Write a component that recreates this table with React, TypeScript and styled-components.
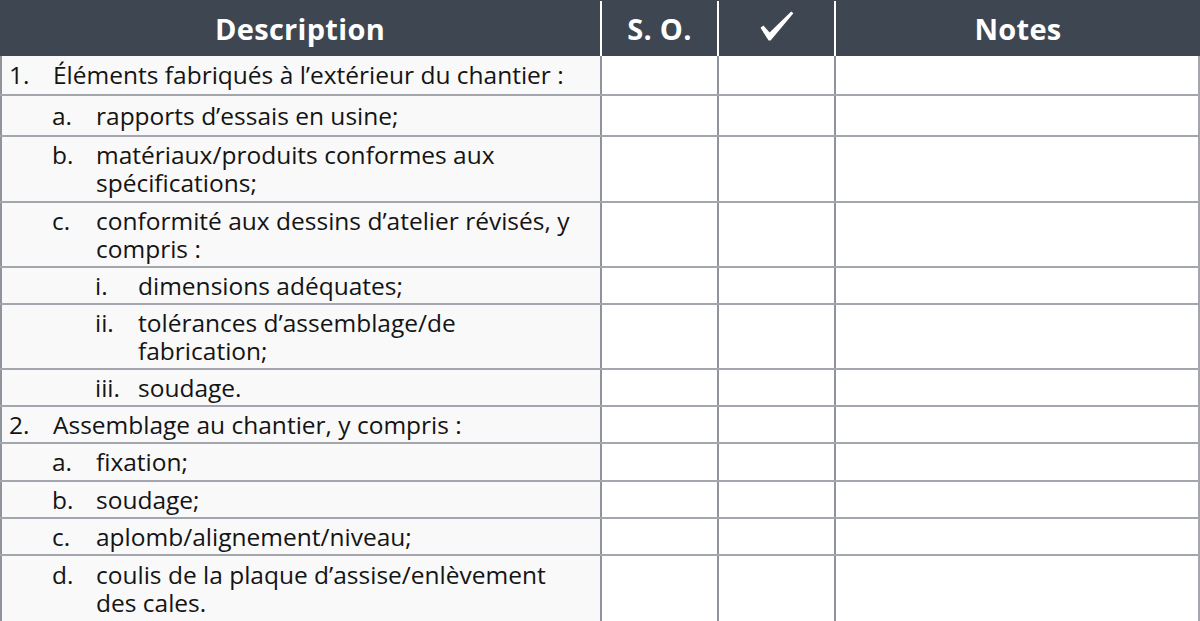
import React from "react";
import styled, { createGlobalStyle } from "styled-components";

const GlobalStyle = createGlobalStyle`
  html, body { margin: 0; padding: 0; background: #ffffff; }
  body { font-family: "Open Sans", "Noto Sans", sans-serif; }
  * { box-sizing: border-box; }
`;

const COLS = "600px 117px 117px 366px";

const Table = styled.div`
  width: 1200px;
  height: 621px;
  overflow: hidden;
  display: flex;
  flex-direction: column;
`;

const HeaderRow = styled.div`
  display: grid;
  grid-template-columns: ${COLS};
  height: 56px;
  background: #3d4651;
  flex: none;
`;

const HeaderCell = styled.div<{ $first?: boolean }>`
  display: flex;
  align-items: center;
  justify-content: center;
  color: #ffffff;
  font-family: "Open Sans", sans-serif;
  font-weight: 700;
  font-size: 29px;
  letter-spacing: 0.3px;
  border-left: ${(p) => (p.$first ? "none" : "2px solid #ffffff")};
  margin-top: ${(p) => (p.$first ? "0" : "1px")};
`;

const BodyRow = styled.div<{ $h: number }>`
  display: grid;
  grid-template-columns: ${COLS};
  height: ${(p) => p.$h}px;
  flex: none;
  border-bottom: 2px solid #a3a7ad;
  &:last-child { border-bottom: none; flex: 1; }
`;

const DescCell = styled.div<{ $level: number }>`
  display: flex;
  align-items: center;
  background: #f9f9f9;
  border-left: 2px solid #8f949b;
  padding-left: ${(p) => 7 + p.$level * 43}px;
  padding-right: 22px;
  color: #141414;
  font-size: 24.5px;
  font-weight: 500;
  line-height: 28px;
`;

const Entry = styled.div`
  display: flex;
  align-items: flex-start;
  width: 100%;
`;

const Marker = styled.span<{ $w: number }>`
  flex: none;
  width: ${(p) => p.$w}px;
`;

const Text = styled.span`
  flex: 1;
  min-width: 0;
`;

const EmptyCell = styled.div<{ $last?: boolean }>`
  background: #ffffff;
  border-left: 2px solid #8f949b;
  border-right: ${(p) => (p.$last ? "2px solid #a3a7ad" : "none")};
`;

const CheckIcon = () => (
  <svg width="34" height="30" viewBox="0 0 34 30" style={{ marginTop: "-5px" }}>
    <path
      d="M0.5 16.8 L3.4 14.6 L9.6 21.6 L31.2 0.6 L33.4 2.2 L10.6 29.4 L8.6 29.4 Z"
      fill="#ffffff"
    />
  </svg>
);

type Item = { level: number; marker: string; text: string; h: number };

const items: Item[] = [
  { level: 0, marker: "1.", text: "Éléments fabriqués à l’extérieur du chantier :", h: 40 },
  { level: 1, marker: "a.", text: "rapports d’essais en usine;", h: 41 },
  { level: 1, marker: "b.", text: "matériaux/produits conformes aux spécifications;", h: 66 },
  { level: 1, marker: "c.", text: "conformité aux dessins d’atelier révisés, y compris :", h: 65 },
  { level: 2, marker: "i.", text: "dimensions adéquates;", h: 37 },
  { level: 2, marker: "ii.", text: "tolérances d’assemblage/de fabrication;", h: 65 },
  { level: 2, marker: "iii.", text: "soudage.", h: 37 },
  { level: 0, marker: "2.", text: "Assemblage au chantier, y compris :", h: 37 },
  { level: 1, marker: "a.", text: "fixation;", h: 38 },
  { level: 1, marker: "b.", text: "soudage;", h: 37 },
  { level: 1, marker: "c.", text: "aplomb/alignement/niveau;", h: 37 },
  { level: 1, marker: "d.", text: "coulis de la plaque d’assise/enlèvement des cales.", h: 65 },
];

export default function App() {
  return (
    <>
      <GlobalStyle />
      <Table>
        <HeaderRow>
          <HeaderCell $first>Description</HeaderCell>
          <HeaderCell>S. O.</HeaderCell>
          <HeaderCell>
            <CheckIcon />
          </HeaderCell>
          <HeaderCell>Notes</HeaderCell>
        </HeaderRow>
        {items.map((it, i) => (
          <BodyRow key={i} $h={it.h}>
            <DescCell $level={it.level}>
              <Entry>
                <Marker $w={it.level === 2 ? 43 : 44}>{it.marker}</Marker>
                <Text>{it.text}</Text>
              </Entry>
            </DescCell>
            <EmptyCell />
            <EmptyCell />
            <EmptyCell $last />
          </BodyRow>
        ))}
      </Table>
    </>
  );
}
